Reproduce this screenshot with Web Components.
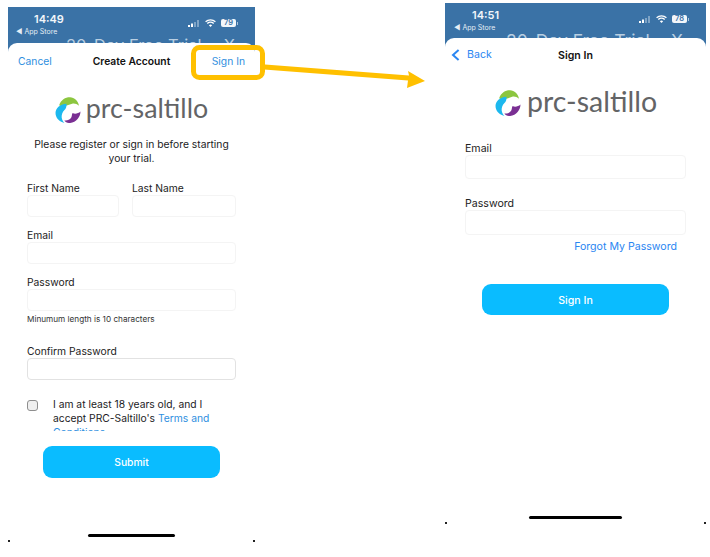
<!DOCTYPE html>
<html>
<head>
<meta charset="utf-8">
<title>Sign in flow</title>
<style>
  html, body { margin: 0; padding: 0; background: #fff; }
  body { width: 710px; height: 557px; overflow: hidden; position: relative; font-family: Inter, "Liberation Sans", sans-serif; }
  #page { display: flex; align-items: flex-start; padding-left: 8px; gap: 190px; }
  #left { margin-top: 7px; }
  #right { margin-top: 3px; }
</style>
</head>
<body>
<div id="page">
  <phone-screen id="left" time="14:49" battery="79" style="--w:247px;--h:535px;--head:36px;--nav:36px;--fs:10.3px;--bar:87px;--pad-left:8px;--title-left:58px;--x-right:20px;--title-fs:16.5px">
    <nav-row slot="nav">
      <span slot="start" class="link">Cancel</span>
      <span slot="title">Create Account</span>
      <span slot="end" class="link">Sign In</span>
    </nav-row>
    <create-form></create-form>
  </phone-screen>
  <phone-screen id="right" time="14:51" battery="78" style="--w:261px;--h:521px;--head:35px;--nav:35px;--fs:10.6px;--bar:93px;--pad-left:9px;--title-left:61px;--x-right:23px;--title-fs:17.5px">
    <nav-row slot="nav" class="back">
      <span slot="start" class="link"><back-chevron></back-chevron>Back</span>
      <span slot="title">Sign In</span>
    </nav-row>
    <signin-form></signin-form>
  </phone-screen>
</div>
<callout-arrow></callout-arrow>

<script>
"use strict";

class PhoneScreen extends HTMLElement {
    constructor() {
        super();
        const time = this.getAttribute('time');
        const battery = this.getAttribute('battery');
        this.attachShadow({ mode: 'open' }).innerHTML = `
        <style>
          :host { display: flex; flex-direction: column; flex: none; width: var(--w); height: var(--h); font-size: var(--fs); color: #1c1c1e; }
          #head { height: calc(var(--head) + 10px); margin-bottom: -10px; background: #3a72a6; color: #fff; overflow: hidden; display: flex; flex-direction: column; }
          #status { display: flex; justify-content: space-between; align-items: flex-start; padding: 6px 17px 0 var(--pad-left); height: 22px; }
          #clock { display: flex; flex-direction: column; align-items: flex-start; }
          #time { font-size: 11px; font-weight: 600; line-height: 12px; margin-left: 18px; color: #f2f6fa; }
          #store { font-size: 7px; line-height: 9px; margin-top: 2px; white-space: nowrap; color: #e4edf5; }
          #icons { display: flex; align-items: center; gap: 5px; margin-top: 6px; }
          #battery { width: 15px; height: 8px; border-radius: 2px; background: #f2f6fa; color: #3a72a6; font-size: 7.500px; font-weight: 600; line-height: 8px; text-align: center; }
          #tip { width: 1px; height: 3px; margin-left: -4px; background: #a9c3da; }
          #trial { position: relative; display: block; padding-left: var(--title-left); font-size: var(--title-fs); line-height: 20px; color: #b9cfe2; white-space: nowrap; }
          #trial i { position: absolute; right: var(--x-right); top: 0; font-style: normal; }
          #sheet { position: relative; flex: 1; min-height: 0; background: #fff; border-radius: 9px 9px 0 0; display: flex; flex-direction: column; }
          #main { flex: 1; min-height: 0; display: flex; flex-direction: column; }
          #foot { display: flex; justify-content: space-between; align-items: flex-end; height: 9px; }
          .dot { width: 2px; height: 2px; background: #222; }
          #bar { width: var(--bar); height: 3px; border-radius: 2px; background: #000; align-self: flex-start; margin-top: 1px; }
        </style>
        <div id="head">
          <div id="status">
            <div id="clock"><span id="time">${time}</span><span id="store">◀ App Store</span></div>
            <div id="icons">
              <svg width="12" height="7" viewBox="0 0 12 7"><rect x="0" y="5" width="2" height="2" fill="#fff"/><rect x="3" y="3.5" width="2" height="3.5" fill="#fff"/><rect x="6" y="2" width="2" height="5" fill="#7fa4c6"/><rect x="9" y="0" width="2" height="7" fill="#7fa4c6"/></svg>
              <svg width="11" height="8" viewBox="0 0 11 8"><path d="M.6 2.8a7 7 0 0 1 9.8 0M2.3 4.5a4.6 4.6 0 0 1 6.4 0" fill="none" stroke="#fff" stroke-width="1.3"/><path d="M5.5 8 3.9 6.2a2.3 2.3 0 0 1 3.2 0z" fill="#fff"/></svg>
              <div id="battery">${battery}</div><div id="tip"></div>
            </div>
          </div>
          <div id="trial">20-Day Free Trial<i>X</i></div>
        </div>
        <div id="sheet">
          <slot name="nav"></slot>
          <div id="main"><slot></slot></div>
          <div id="foot"><span class="dot"></span><span id="bar"></span><span class="dot"></span></div>
        </div>`;
    }
}

class NavRow extends HTMLElement {
    constructor() {
        super();
        this.attachShadow({ mode: 'open' }).innerHTML = `
        <style>
          :host { display: grid; grid-template-columns: 1fr auto 1fr; align-items: center; height: var(--nav); padding: 0 10px; flex: none; white-space: nowrap; }
          #title { font-weight: 600; color: #111; }
          #end { text-align: right; }
          ::slotted(.link) { color: #2f8fe0; display: inline-flex; align-items: center; }
          :host(.back) { padding: 0 6px; }
          :host(.back) ::slotted(.link) { margin-top: 1px; color: #2a86f2; }
        </style>
        <div><slot name="start"></slot></div>
        <div id="title"><slot name="title"></slot></div>
        <div id="end"><slot name="end"></slot></div>`;
    }
}

class BackChevron extends HTMLElement {
    constructor() {
        super();
        this.attachShadow({ mode: 'open' }).innerHTML = `
        <style>:host { display: inline-flex; margin-right: 7px; }</style>
        <svg width="9" height="12" viewBox="0 0 9 12"><path d="M7.6 1 2 6l5.6 5" fill="none" stroke="#2a86f2" stroke-width="2"/></svg>`;
    }
}

class BrandLogo extends HTMLElement {
    constructor() {
        super();
        this.attachShadow({ mode: 'open' }).innerHTML = `
        <style>
          :host { display: flex; align-items: center; justify-content: center; font-size: var(--logo-fs); color: #636466; line-height: 26px; }
          svg { flex: none; margin-right: var(--logo-gap); }
          span { font-family: Lato, "Open Sans", sans-serif; white-space: nowrap; margin-top: -5px; }
        </style>
        <svg width="26" height="26" viewBox="2 1 24 25">
          <path d="M5.500 9C7 3.500 12 1 16 1.200 20 1.500 24 4.500 24.500 9.500 22.500 7.500 20 7 18 7.500 15 8.300 12 10 9 10 7.500 10 6.500 9.800 5.500 9z" fill="#8cc63f"/>
          <path d="M12.500 7.500C6 8 2 12 2 16.500 2 21 5.500 25 10.500 26 8.500 24 7.500 21 8 18.500 8.500 15.500 10 14 11.500 12.500 12.500 11 12.800 9 12.500 7.500z" fill="#1cb8ee"/>
          <path d="M26 15C26 20 22 25.500 16 26 13.500 26.200 11.500 25 10.500 23.500 13 24 15.500 23 17 21 18 19.500 17.500 17.500 18.500 16.500 20.500 17.500 24 17 26 15z" fill="#7a2f93"/>
        </svg><span>prc-saltillo</span>`;
    }
}

class TextField extends HTMLElement {
    constructor() {
        super();
        this.attachShadow({ mode: 'open' }).innerHTML = `
        <style>
          :host { display: block; min-width: 0; }
          label { display: block; line-height: 14px; margin-top: var(--label-top, 0); margin-bottom: var(--label-bottom, -1px); white-space: nowrap; color: #222; }
          input { display: block; box-sizing: border-box; width: 100%; height: var(--field-h, 22px); margin: 0; padding: 0 6px; border: 1px solid var(--field-line, #f4f4f4); border-radius: 4px; background: #fff; outline: none; }
        </style>
        <label>${this.getAttribute('label')}</label>
        <input type="${this.getAttribute('type') || 'text'}">`;
    }
}

class PrimaryButton extends HTMLElement {
    constructor() {
        super();
        this.attachShadow({ mode: 'open' }).innerHTML = `
        <style>
          :host { display: flex; align-items: center; justify-content: center; box-sizing: border-box; background: #0abcff; color: #fff; border-radius: 9px; font-weight: 500; flex: none; }
        </style>
        <slot></slot>`;
    }
}

class CreateForm extends HTMLElement {
    constructor() {
        super();
        this.attachShadow({ mode: 'open' }).innerHTML = `
        <style>
          :host { display: flex; flex-direction: column; flex: 1; min-height: 0; --logo-fs: 26.800px; --logo-gap: 5px; --label-top: -1px; --label-bottom: 0; }
          #scroll { height: 352px; overflow: hidden; padding: 18px 19px 0; box-sizing: border-box; flex: none; }
          p { margin: 14px 0 17px; text-align: center; line-height: 14px; white-space: nowrap; }
          #names { display: grid; grid-template-columns: 92px 104px; column-gap: 13px; }
          text-field { margin-bottom: 12px; }
          #hint { font-size: 8.200px; line-height: 10px; margin: -9px 0 21px; color: #333; }
          #confirm { --field-line: #e2e2e2; margin-bottom: 17px; }
          #agree { display: flex; line-height: 14px; }
          #agree input { flex: none; width: 11px; height: 11px; margin: 3px 15px 0 0; appearance: none; border: 1px solid #8e8e8e; border-radius: 3px; background: #efefef; }
          #agree a { color: #2f8fe0; }
          primary-button { width: 177px; height: 32px; margin: 15px 0 0 35px; }
        </style>
        <div id="scroll">
          <brand-logo></brand-logo>
          <p>Please register or sign in before starting<br>your trial.</p>
          <div id="names">
            <text-field label="First Name"></text-field>
            <text-field label="Last Name"></text-field>
          </div>
          <text-field label="Email"></text-field>
          <text-field label="Password" type="password"></text-field>
          <div id="hint">Minumum length is 10 characters</div>
          <text-field id="confirm" label="Confirm Password" type="password"></text-field>
          <div id="agree"><input type="checkbox"><span>I am at least 18 years old, and I<br>accept PRC-Saltillo's <a>Terms and<br>Conditions</a></span></div>
        </div>
        <primary-button>Submit</primary-button>`;
    }
}

class SigninForm extends HTMLElement {
    constructor() {
        super();
        this.attachShadow({ mode: 'open' }).innerHTML = `
        <style>
          :host { display: flex; flex-direction: column; flex: 1; min-height: 0; padding: 17px 20px 0; --logo-fs: 28.500px; --logo-gap: 6px; }
          brand-logo { margin-bottom: 26px; margin-left: 1px; }
          #mail { --field-h: 24px; margin-bottom: 18px; }
          #pass { --field-h: 25px; }
          #forgot { color: #2a86f2; text-align: right; line-height: 14px; margin: 5px 9px 0 0; }
          primary-button { width: 187px; height: 31px; margin: 30px 0 0 17px; padding-top: 1px; }
        </style>
        <brand-logo></brand-logo>
        <text-field id="mail" label="Email"></text-field>
        <text-field id="pass" label="Password" type="password"></text-field>
        <div id="forgot">Forgot My Password</div>
        <primary-button>Sign In</primary-button>`;
    }
}

// annotation lying over both screens
class CalloutArrow extends HTMLElement {
    constructor() {
        super();
        this.attachShadow({ mode: 'open' }).innerHTML = `
        <style>
          :host { position: absolute; left: 0; top: 0; width: 710px; height: 557px; pointer-events: none; }
          svg { display: block; }
        </style>
        <svg width="710" height="557" viewBox="0 0 710 557">
          <rect x="193.500" y="47.500" width="69" height="30" rx="6" fill="none" stroke="#ffc000" stroke-width="5"/>
          <path d="M265 64.500 409 75.500 408 71 425 81 407 88 408 80.500 264 69.500z" fill="#ffc000"/>
        </svg>`;
    }
}

customElements.define('nav-row', NavRow);
customElements.define('back-chevron', BackChevron);
customElements.define('brand-logo', BrandLogo);
customElements.define('text-field', TextField);
customElements.define('primary-button', PrimaryButton);
customElements.define('create-form', CreateForm);
customElements.define('signin-form', SigninForm);
customElements.define('phone-screen', PhoneScreen);
customElements.define('callout-arrow', CalloutArrow);
</script>
</body>
</html>
